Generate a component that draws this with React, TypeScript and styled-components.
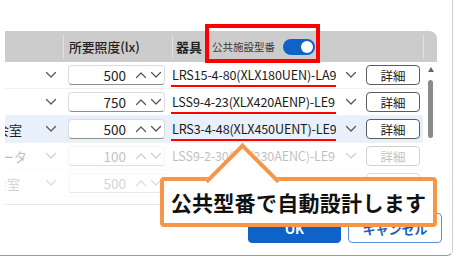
import React from "react";
import styled, { createGlobalStyle } from "styled-components";

const Global = createGlobalStyle`
  html, body { margin: 0; padding: 0; background: #fff; overflow: hidden; }
  body { font-family: "Noto Sans CJK JP", "Noto Sans", sans-serif; color: #1b1b1b; }
  * { box-sizing: border-box; }
`;

const Stage = styled.div`
  position: relative;
  width: 459px;
  height: 258px;
  overflow: hidden;
  background: #fff;
`;

const Dialog = styled.div`
  width: 453px;
  height: 256px;
  border-right: 1px solid #d0d0d0;
  border-bottom: 1px solid #9c9c9c;
  border-bottom-right-radius: 6px;
  padding-top: 31px;
  padding-left: 5px;
  display: flex;
  flex-direction: column;
`;

const Table = styled.div`
  width: 432px;
  overflow: hidden;
`;

const HeaderRow = styled.div`
  height: 31px;
  background: #cccccc;
  border-top-right-radius: 8px;
  display: grid;
  grid-template-columns: 58px 109px 251px 14px;
  align-items: center;
`;

const HeaderCell = styled.div<{ $divider?: boolean; $pad?: number }>`
  height: 24px;
  display: flex;
  align-items: center;
  padding-left: ${(p) => p.$pad ?? 5}px;
  border-left: ${(p) => (p.$divider ? "1px solid #e2e2e2" : "none")};
  white-space: nowrap;
`;

const HeaderText = styled.span<{ $weight?: number; $size?: number }>`
  font-size: ${(p) => p.$size ?? 13}px;
  font-weight: ${(p) => p.$weight ?? 600};
  color: #222;
`;

const ToggleLabel = styled.span`
  font-size: 10.5px;
  color: #3a3a3a;
  margin-left: 10px;
`;

const Toggle = styled.span`
  width: 32px;
  height: 16px;
  border-radius: 8px;
  background: #0f62c8;
  margin-left: 8px;
  display: flex;
  align-items: center;
  justify-content: flex-end;
  padding-right: 2px;
`;

const Knob = styled.span`
  width: 12px;
  height: 12px;
  border-radius: 50%;
  background: #fff;
`;

const Body = styled.div`
  display: flex;
`;

const RowList = styled.div`
  width: 418px;
  display: flex;
  flex-direction: column;
`;

const Row = styled.div<{ $selected?: boolean; $fade?: number }>`
  height: 27px;
  display: grid;
  grid-template-columns: 58px 109px 251px;
  align-items: center;
  background: ${(p) => (p.$selected ? "#e8f0fb" : "#fff")};
  border-bottom: 1px solid #f1f1f1;
  opacity: ${(p) => p.$fade ?? 1};
`;

const NameCell = styled.div`
  display: flex;
  align-items: center;
  padding-right: 7px;
  min-width: 0;
`;

const NameText = styled.span<{ $shift: number }>`
  flex-shrink: 0;
  white-space: nowrap;
  font-size: 13px;
  margin-left: ${(p) => p.$shift}px;
`;

const ChevronSvg = styled.svg`
  width: 10px;
  height: 6px;
  flex-shrink: 0;
  overflow: visible;
`;

const PushRight = styled.span`
  margin-left: auto;
  display: flex;
`;

const Chevron = ({ up }: { up?: boolean }) => (
  <ChevronSvg viewBox="0 0 10 6">
    <polyline
      points={up ? "0.5,5.5 5,1 9.5,5.5" : "0.5,0.5 5,5 9.5,0.5"}
      fill="none"
      stroke="#555"
      strokeWidth="1.2"
      strokeLinecap="round"
      strokeLinejoin="round"
    />
  </ChevronSvg>
);

const LuxCell = styled.div`
  padding-left: 5px;
`;

const InputBox = styled.div`
  width: 97px;
  height: 20px;
  background: #fff;
  border: 1px solid #dcdcdc;
  border-bottom-color: #8e8e8e;
  border-radius: 4px;
  display: flex;
  align-items: center;
  padding-right: 3px;
`;

const InputValue = styled.span`
  width: 58px;
  text-align: right;
  font-size: 13.5px;
  color: #222;
`;

const Spin = styled.span`
  display: flex;
  gap: 5px;
  margin-left: 10px;
`;

const FixtureCell = styled.div`
  display: flex;
  align-items: center;
  margin-left: -1px;
`;

const FixtureText = styled.div<{ $mark?: boolean }>`
  width: 165px;
  height: 23px;
  padding-left: 1px;
  font-size: 12.6px;
  letter-spacing: -0.15px;
  line-height: 21px;
  white-space: nowrap;
  overflow: hidden;
  color: #1b1b1b;
  border-bottom: 2px solid ${(p) => (p.$mark ? "#ff0000" : "transparent")};
`;

const FixtureChevron = styled.span`
  margin-left: 10px;
  display: flex;
`;

const DetailButton = styled.div`
  margin-left: 10px;
  width: 54px;
  height: 20px;
  border: 1px solid #5c5c5c;
  border-radius: 4px;
  background: #fff;
  display: flex;
  align-items: center;
  justify-content: center;
  font-size: 12.5px;
  color: #222;
`;

const ScrollTrack = styled.div`
  width: 14px;
  display: flex;
  flex-direction: column;
  align-items: center;
  padding-top: 5px;
  padding-left: 1px;
`;

const ScrollArrow = styled.svg`
  width: 6px;
  height: 5px;
`;

const ScrollThumb = styled.div`
  margin-top: 8px;
  width: 5px;
  height: 58px;
  border-radius: 3px;
  background: #8a8a8a;
`;

const TableFoot = styled.div`
  height: 8px;
  border-bottom: 1px solid #e8e8e8;
`;

const Footer = styled.div`
  display: flex;
  justify-content: flex-end;
  gap: 7px;
  padding-top: 8px;
  padding-right: 10px;
`;

const Button = styled.div<{ $primary?: boolean }>`
  width: ${(p) => (p.$primary ? 93 : 94)}px;
  height: 30px;
  border-radius: 4px;
  display: flex;
  align-items: center;
  justify-content: center;
  font-size: 13px;
  font-weight: 700;
  background: ${(p) => (p.$primary ? "#0f62c8" : "#fff")};
  color: ${(p) => (p.$primary ? "#fff" : "#1a5fc4")};
  border: 1px solid ${(p) => (p.$primary ? "#0f62c8" : "#5a8fdc")};
`;

const Highlight = styled.div`
  position: absolute;
  left: 205px;
  top: 24px;
  width: 115px;
  height: 39px;
  border: 4px solid #ff0000;
  pointer-events: none;
`;

const Callout = styled.div`
  position: absolute;
  left: 160px;
  top: 177px;
  width: 277px;
  height: 50px;
  border: 4px solid #f79646;
  border-radius: 4px;
  background: #fff;
  display: flex;
  align-items: center;
  justify-content: center;
  z-index: 2;

  &::before {
    content: "";
    position: absolute;
    left: 52px;
    top: -27px;
    width: 49px;
    height: 49px;
    background: #fff;
    border-top: 4px solid #f79646;
    border-left: 4px solid #f79646;
    transform: rotate(45deg);
  }
`;

const CalloutText = styled.span`
  position: relative;
  z-index: 1;
  font-size: 21px;
  font-weight: 700;
  color: #111;
  letter-spacing: 0.3px;
  white-space: nowrap;
`;

type RowData = {
  name: string;
  shift: number;
  lux: string;
  fixture: string;
  selected?: boolean;
  fade?: number;
  mark?: boolean;
};

const rows: RowData[] = [
  { name: "", shift: 0, lux: "500", fixture: "LRS15-4-80(XLX180UEN)-LA9", mark: true },
  { name: "", shift: 0, lux: "750", fixture: "LSS9-4-23(XLX420AENP)-LE9", mark: true },
  { name: "集会室", shift: -22, lux: "500", fixture: "LRS3-4-48(XLX450UENT)-LE9", selected: true, mark: true },
  { name: "コンピュータ", shift: -56, lux: "100", fixture: "LSS9-2-30(XLX230AENC)-LE9", fade: 0.28 },
  { name: "集会室", shift: -24, lux: "500", fixture: "LRS3-4-48(XLX450UENT)-LE9", fade: 0.2 },
];

export default function App() {
  return (
    <Stage>
      <Global />
      <Dialog>
        <Table>
          <HeaderRow>
            <HeaderCell />
            <HeaderCell $divider>
              <HeaderText $weight={500} $size={12.8}>所要照度(lx)</HeaderText>
            </HeaderCell>
            <HeaderCell $divider $pad={3}>
              <HeaderText $weight={700}>器具</HeaderText>
              <ToggleLabel>公共施設型番</ToggleLabel>
              <Toggle>
                <Knob />
              </Toggle>
            </HeaderCell>
            <HeaderCell $divider />
          </HeaderRow>
          <Body>
            <RowList>
              {rows.map((r, i) => (
                <Row key={i} $selected={r.selected} $fade={r.fade}>
                  <NameCell>
                    <NameText $shift={r.shift}>{r.name}</NameText>
                    <PushRight>
                      <Chevron />
                    </PushRight>
                  </NameCell>
                  <LuxCell>
                    <InputBox>
                      <InputValue>{r.lux}</InputValue>
                      <Spin>
                        <Chevron up />
                        <Chevron />
                      </Spin>
                    </InputBox>
                  </LuxCell>
                  <FixtureCell>
                    <FixtureText $mark={r.mark}>{r.fixture}</FixtureText>
                    <FixtureChevron>
                      <Chevron />
                    </FixtureChevron>
                    <DetailButton>詳細</DetailButton>
                  </FixtureCell>
                </Row>
              ))}
            </RowList>
            <ScrollTrack>
              <ScrollArrow viewBox="0 0 6 5">
                <polygon points="3,0 6,5 0,5" fill="#666" />
              </ScrollArrow>
              <ScrollThumb />
            </ScrollTrack>
          </Body>
          <TableFoot />
        </Table>
        <Footer>
          <Button $primary>OK</Button>
          <Button>キャンセル</Button>
        </Footer>
      </Dialog>
      <Highlight />
      <Callout>
        <CalloutText>公共型番で自動設計します</CalloutText>
      </Callout>
    </Stage>
  );
}
